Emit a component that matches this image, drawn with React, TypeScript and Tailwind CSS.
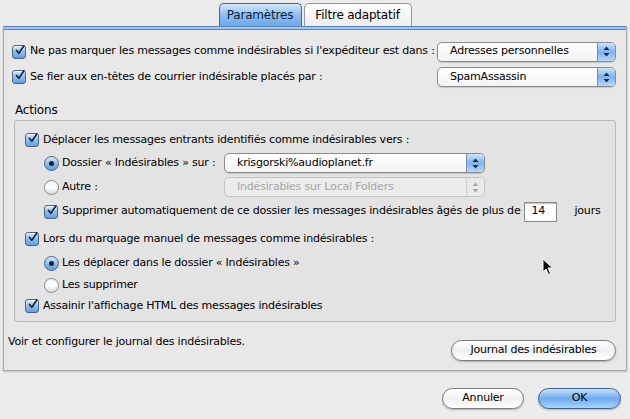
import React from "react";

const Check = () => (
  <span className="flex h-[14px] w-[14px] shrink-0 items-center justify-center rounded-[3px] border border-[#4d6585] bg-gradient-to-b from-[#d8e9fa] via-[#8fbdec] to-[#5e9fe2] shadow-[inset_0_1px_0_rgba(255,255,255,0.7)]">
    <svg width="13" height="13" viewBox="0 0 13 13" className="-mt-[3px] ml-[2px]">
      <path d="M2 6.5 L5 10 L11.5 0.5" fill="none" stroke="#10203a" strokeWidth="2.2" strokeLinecap="round" strokeLinejoin="round" />
    </svg>
  </span>
);

const Radio = ({ on }: { on?: boolean }) =>
  on ? (
    <span className="flex h-[15px] w-[15px] shrink-0 items-center justify-center rounded-full border border-[#4d6585] bg-gradient-to-b from-[#d8e9fa] via-[#8fbdec] to-[#5e9fe2]">
      <span className="h-[5px] w-[5px] rounded-full bg-[#15233a]" />
    </span>
  ) : (
    <span className="h-[15px] w-[15px] shrink-0 rounded-full border border-[#8a8a8a] bg-gradient-to-b from-[#f4f4f4] via-[#ffffff] to-[#d9d9d9]" />
  );

const Arrows = ({ dim }: { dim?: boolean }) => (
  <svg width="7" height="11" viewBox="0 0 7 11">
    <path d="M3.5 0.5 L6.5 4 L0.5 4 Z M3.5 10.5 L6.5 7 L0.5 7 Z" fill={dim ? "#a8a8a8" : "#1a2a44"} />
  </svg>
);

const Select = ({ label, w, dim }: { label: string; w: string; dim?: boolean }) => (
  <div
    className={`flex h-[20px] ${w} shrink-0 items-stretch overflow-hidden rounded-[5px] border ${
      dim ? "border-[#c4c4c4] bg-[#ececec] text-[#a6a6a6]" : "border-[#8c8c8c] bg-gradient-to-b from-[#ffffff] to-[#f3f3f3] text-black shadow-[0_1px_1px_rgba(0,0,0,0.15)]"
    }`}
  >
    <span className="flex flex-1 items-center truncate pl-[12px]">{label}</span>
    <span
      className={`flex w-[18px] items-center justify-center border-l ${
        dim ? "border-[#d0d0d0] bg-[#eaeaea]" : "border-[#6f8fb5] bg-gradient-to-b from-[#cfe3f8] via-[#7db3ec] to-[#b8d8fb]"
      }`}
    >
      <Arrows dim={dim} />
    </span>
  </div>
);

const AquaButton = ({ label, w, blue }: { label: string; w: string; blue?: boolean }) => (
  <div
    className={`flex h-[21px] ${w} items-center justify-center rounded-full border ${
      blue
        ? "border-[#3d5f8c] bg-gradient-to-b from-[#c9e1fb] via-[#6eaaee] to-[#a9d4fd]"
        : "border-[#7a7a7a] bg-gradient-to-b from-[#ffffff] via-[#f0f0f0] to-[#ffffff]"
    } shadow-[0_1px_2px_rgba(0,0,0,0.25)]`}
  >
    {label}
  </div>
);

export default function App() {
  return (
    <div className="relative h-[419px] w-[630px] overflow-hidden bg-[#ececec] font-['DejaVu_Sans',sans-serif] text-[11px] tracking-[-0.2px] text-black">
      {/* tabs */}
      <div className="flex h-[26px] items-end justify-center pt-[3px]">
        <div className="flex h-[23px] w-[83px] items-center justify-center rounded-t-[5px] border border-b-0 border-[#4a6a95] bg-gradient-to-b from-[#d5e7fb] via-[#8fbef0] to-[#6aa8ea] text-[12px] text-[#0d1f3a]">
          Paramètres
        </div>
        <div className="ml-[2px] flex h-[23px] w-[108px] items-center justify-center rounded-t-[5px] border border-b-0 border-[#9a9a9a] bg-gradient-to-b from-[#ffffff] to-[#ededed] text-[12px]">
          Filtre adaptatif
        </div>
      </div>

      {/* panel */}
      <div className="mx-[3px] h-[345px] border border-t-0 border-[#a9a9a9] bg-[#e8e8e8] shadow-[0_1px_2px_rgba(0,0,0,0.2)]">
        <div className="h-[4px] border-t border-b border-[#5d84b8] bg-[#9cc6f2]" />

        <div className="mt-[11px] flex h-[21px] items-center pl-[8px] pr-[10px]">
          <Check />
          <span className="ml-[4px] flex-1 whitespace-nowrap">Ne pas marquer les messages comme indésirables si l'expéditeur est dans :</span>
          <Select label="Adresses personnelles" w="w-[179px]" />
        </div>
        <div className="mt-[5px] flex h-[20px] items-center pl-[8px] pr-[10px]">
          <Check />
          <span className="ml-[4px] flex-1 whitespace-nowrap">Se fier aux en-têtes de courrier indésirable placés par :</span>
          <Select label="SpamAssassin" w="w-[179px]" />
        </div>

        <div className="mt-[15px] pl-[11px] text-[12px] leading-[16px]">Actions</div>

        {/* group box */}
        <div className="ml-[10px] mr-[10px] mt-[2px] h-[202px] rounded-[3px] border border-[#b8b8b8] bg-[#e3e3e3] pl-[10px] pr-[10px]">
          <div className="mt-[12px] flex h-[14px] items-center">
            <Check />
            <span className="ml-[4px] whitespace-nowrap">Déplacer les messages entrants identifiés comme indésirables vers :</span>
          </div>
          <div className="mt-[6px] flex h-[20px] items-center pl-[19px]">
            <Radio on />
            <span className="ml-[3px] w-[162px] whitespace-nowrap">Dossier « Indésirables » sur :</span>
            <Select label="krisgorski%audioplanet.fr" w="w-[261px]" />
          </div>
          <div className="mt-[4px] flex h-[20px] items-center pl-[19px]">
            <Radio />
            <span className="ml-[3px] w-[162px]">Autre :</span>
            <Select label="Indésirables sur Local Folders" w="w-[261px]" dim />
          </div>
          <div className="mt-[4px] flex h-[21px] items-center pl-[19px]">
            <Check />
            <span className="ml-[4px] whitespace-nowrap">Supprimer automatiquement de ce dossier les messages indésirables âgés de plus de</span>
            <span className="ml-[4px] flex h-[20px] w-[33px] shrink-0 items-center border border-[#8a8a8a] bg-white pl-[6px] shadow-[inset_0_1px_1px_rgba(0,0,0,0.25)]">
              14
            </span>
            <span className="ml-[17px]">jours</span>
          </div>
          <div className="mt-[10px] flex h-[14px] items-center">
            <Check />
            <span className="ml-[4px] whitespace-nowrap">Lors du marquage manuel de messages comme indésirables :</span>
          </div>
          <div className="mt-[9px] flex h-[16px] items-center pl-[19px]">
            <Radio on />
            <span className="ml-[3px]">Les déplacer dans le dossier « Indésirables »</span>
          </div>
          <div className="mt-[6px] flex h-[16px] items-center pl-[19px]">
            <Radio />
            <span className="ml-[3px]">Les supprimer</span>
          </div>
          <div className="mt-[6px] flex h-[14px] items-center">
            <Check />
            <span className="ml-[4px]">Assainir l'affichage HTML des messages indésirables</span>
          </div>
        </div>

        <div className="mt-[10px] flex items-start pl-[4px] pr-[10px]">
          <span className="mt-[2px] flex-1">Voir et configurer le journal des indésirables.</span>
          <div className="mt-[8px]">
            <AquaButton label="Journal des indésirables" w="w-[165px]" />
          </div>
        </div>
      </div>

      {/* dialog buttons */}
      <div className="mt-[17px] flex justify-end gap-[14px] pr-[9px]">
        <AquaButton label="Annuler" w="w-[82px]" />
        <AquaButton label="OK" w="w-[83px]" blue />
      </div>

      {/* mouse pointer */}
      <svg className="absolute left-[542px] top-[258px]" width="12" height="18" viewBox="0 0 12 18">
        <path d="M1 1 L1 14 L4 11 L6.5 16.5 L8.5 15.5 L6 10 L10.5 10 Z" fill="#000" stroke="#fff" strokeWidth="1" />
      </svg>
    </div>
  );
}
